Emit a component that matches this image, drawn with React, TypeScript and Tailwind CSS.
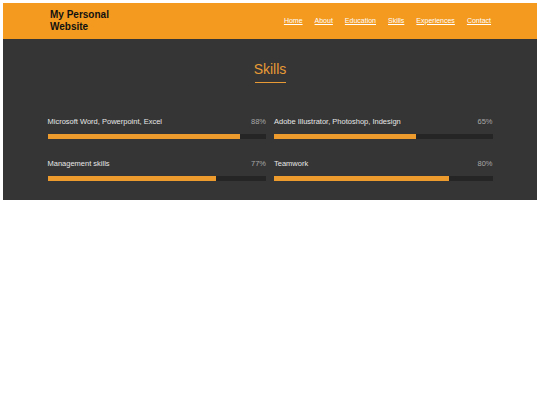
import React from 'react';

const skills = [
  { name: 'Microsoft Word, Powerpoint, Excel', value: 88 },
  { name: 'Adobe Illustrator, Photoshop, Indesign', value: 65 },
  { name: 'Management skills', value: 77 },
  { name: 'Teamwork', value: 80 },
];

const links = ['Home', 'About', 'Education', 'Skills', 'Experiences', 'Contact'];

export default function App() {
  return (
    <div className="m-[3px] font-['Liberation_Sans',Arial,sans-serif]">
      {/* Header */}
      <header className="h-[36px] bg-[#f39a1f] flex items-center justify-between pl-[47px] pr-[46px]">
        <h1 className="text-[10px] leading-[12px] font-bold text-[#111]">
          My Personal
          <br />
          Website
        </h1>
        <nav className="flex gap-[12px] text-[7px] text-white">
          {links.map((l) => (
            <a key={l} href="#" className="underline">
              {l}
            </a>
          ))}
        </nav>
      </header>

      {/* Skills */}
      <section className="bg-[#353535] pt-[20px] pb-[19px]">
        <div className="flex flex-col items-center">
          <h2 className="text-[14px] leading-[20px] text-[#e89b35]">Skills</h2>
          <div className="mt-[3px] w-[31px] h-px bg-[#e89b35]" />
        </div>

        <div className="mx-auto mt-[33px] w-[445px] grid grid-cols-2 gap-x-[8px] gap-y-[19px]">
          {skills.map((s) => (
            <div key={s.name}>
              <div className="flex justify-between text-[7.5px] leading-[12px]">
                <span className="text-[#e6e6e6]">{s.name}</span>
                <span className="text-[#a8a8a8]">{s.value}%</span>
              </div>
              <div className="mt-[6px] h-[5px] bg-[#252525]">
                <div className="h-full bg-[#ee9b2e]" style={{ width: `${s.value}%` }} />
              </div>
            </div>
          ))}
        </div>
      </section>
    </div>
  );
}
